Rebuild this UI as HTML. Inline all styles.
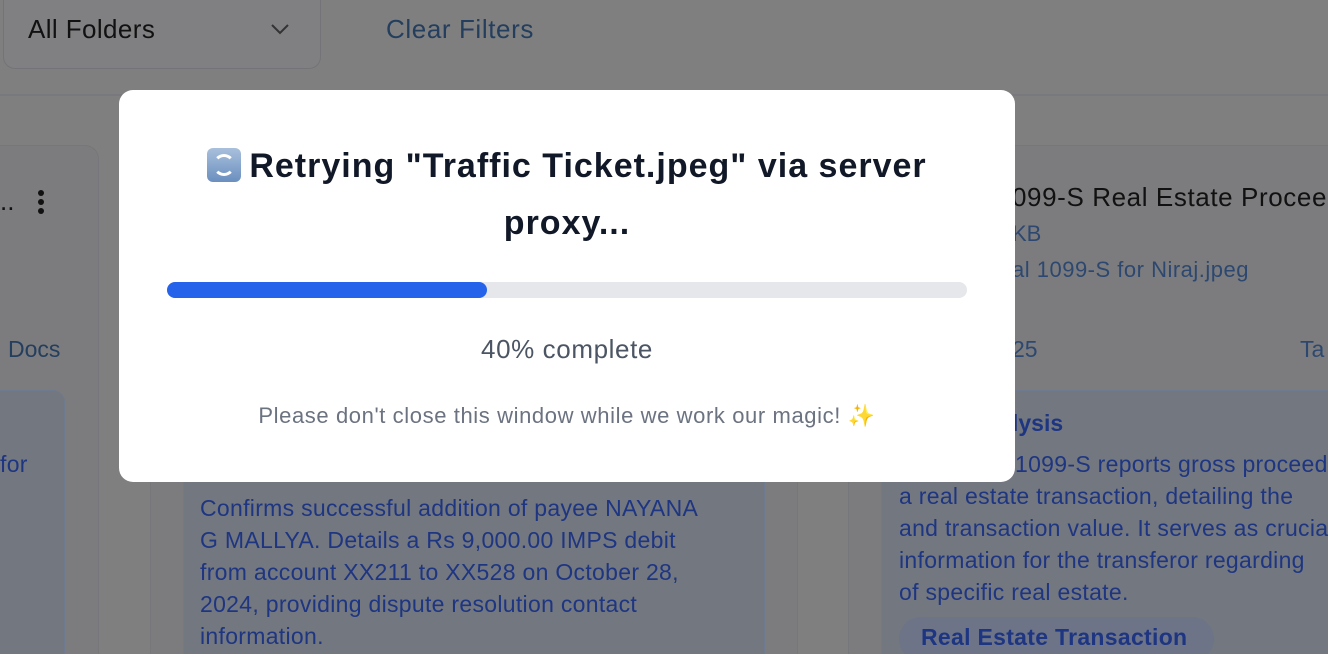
<!DOCTYPE html>
<html><head><meta charset="utf-8"><style>
*{box-sizing:border-box;margin:0;padding:0}
html,body{width:1328px;height:654px;overflow:hidden}
body{background:#7f7f80;font-family:"Liberation Sans",sans-serif;position:relative}
.abs{position:absolute}
.sel{left:3px;top:-12px;width:318px;height:81px;border:1px solid #747478;border-radius:12px;background:#808082}
.t{white-space:nowrap}
.card{background:#7c7c7e;border:1px solid #76777a;border-radius:14px 14px 0 0;border-bottom:none}
.blue{background:#73777f;border:1px solid #6e7a90;border-radius:12px 12px 0 0;border-bottom:none}
.bt{color:#1e3582;font-size:23px;line-height:32px;letter-spacing:0.3px;white-space:nowrap}
</style></head><body>
<div class="abs sel"></div>
<div class="abs t" style="left:28px;top:14px;font-size:26px;color:#111;letter-spacing:0.4px">All Folders</div>
<svg class="abs" style="left:270px;top:22px" width="20" height="14"><path d="M2 3 L10 11 L18 3" stroke="#333" stroke-width="2" fill="none"/></svg>
<div class="abs t" style="left:386px;top:14px;font-size:26px;color:#243e5e;letter-spacing:0.6px">Clear Filters</div>
<div class="abs" style="left:0;top:94px;width:1328px;height:2px;background:#78797c"></div>

<div class="abs card" style="left:-20px;top:145px;width:119px;height:509px"></div>
<div class="abs t" style="left:0;top:186px;font-size:26px;color:#111">..</div>
<div class="abs" style="left:38px;top:190px;width:6px;height:6px;border-radius:50%;background:#111;box-shadow:0 9px 0 #111,0 18px 0 #111"></div>
<div class="abs t" style="left:8px;top:336px;font-size:23px;color:#243e5e">Docs</div>
<div class="abs blue" style="left:-20px;top:390px;width:85px;height:264px"></div>
<div class="abs bt" style="left:0;top:448px">for</div>

<div class="abs card" style="left:150px;top:145px;width:648px;height:509px"></div>
<div class="abs blue" style="left:183px;top:440px;width:582px;height:214px"></div>
<div class="abs bt" style="left:200px;top:492px">Confirms successful addition of payee NAYANA<br>G MALLYA. Details a Rs 9,000.00 IMPS debit<br>from account XX211 to XX528 on October 28,<br>2024, providing dispute resolution contact<br>information.</div>

<div class="abs card" style="left:848px;top:145px;width:480px;height:509px;border-right:none;border-radius:14px 0 0 0"></div>
<div class="abs t" style="left:1012px;top:182px;font-size:26px;color:#111;letter-spacing:0.6px">099-S Real Estate Proceeds</div>
<div class="abs t" style="left:1012px;top:221px;font-size:22px;color:#2d4870">KB</div>
<div class="abs t" style="left:1012px;top:257px;font-size:22px;color:#2d4870;letter-spacing:0.5px">al 1099-S for Niraj.jpeg</div>
<div class="abs t" style="left:1012px;top:336px;font-size:23px;color:#2d4870">25</div>
<div class="abs t" style="left:1300px;top:336px;font-size:23px;color:#2d4870">Ta</div>
<div class="abs blue" style="left:881px;top:390px;width:447px;height:264px;border-right:none;border-radius:12px 0 0 0"></div>
<div class="abs t" style="left:1012px;top:410px;font-size:23px;font-weight:bold;color:#1e3582">lysis</div>
<div class="abs bt" style="left:1015px;top:448px">1099-S reports gross proceeds</div>
<div class="abs bt" style="left:899px;top:480px">a real estate transaction, detailing the<br>and transaction value. It serves as crucial<br>information for the transferor regarding<br>of specific real estate.</div>
<div class="abs" style="left:899px;top:617px;width:315px;height:44px;border-radius:22px;background:#6d7488"></div>
<div class="abs t" style="left:921px;top:624px;font-size:23px;font-weight:bold;color:#1e3582;letter-spacing:0.3px">Real Estate Transaction</div>

<div class="abs" style="left:119px;top:90px;width:896px;height:392px;background:#fff;border-radius:14px"></div>
<div class="abs" style="left:119px;top:138px;width:896px;text-align:center;font-size:34px;font-weight:bold;color:#111827;line-height:57px;letter-spacing:1px">
<span style="display:inline-block;width:34px;height:34px;border-radius:6px;background:linear-gradient(#a9c0dc,#6a8fbf);vertical-align:-5px;position:relative;margin-right:8px"><span style="position:absolute;left:6px;top:6px;width:22px;height:22px;border:3px solid #fff;border-radius:50%;border-left-color:transparent;border-right-color:transparent"></span></span>Retrying "Traffic Ticket.jpeg" via server<br>proxy...</div>
<div class="abs" style="left:167px;top:282px;width:800px;height:16px;border-radius:8px;background:#e5e7eb"></div>
<div class="abs" style="left:167px;top:282px;width:320px;height:16px;border-radius:8px;background:#2563eb"></div>
<div class="abs" style="left:119px;top:334px;width:896px;text-align:center;font-size:26px;color:#4b5563;letter-spacing:0.6px">40% complete</div>
<div class="abs" style="left:119px;top:403px;width:896px;text-align:center;font-size:22px;color:#6b7280;letter-spacing:0.6px">Please don't close this window while we work our magic! <span style="color:#f5c518">✨</span></div>
</body></html>
